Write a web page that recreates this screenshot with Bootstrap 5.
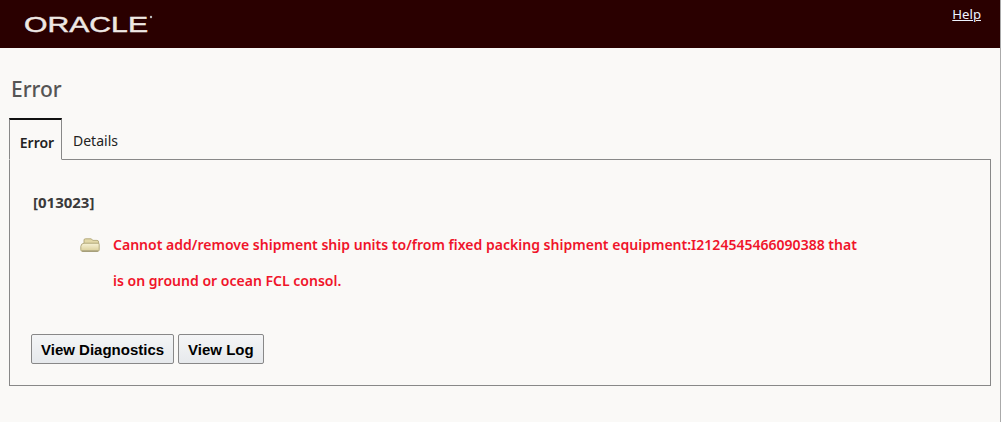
<!DOCTYPE html>
<html lang="en">
<head>
<meta charset="utf-8">
<title>Error</title>
<link rel="stylesheet" href="https://cdn.jsdelivr.net/npm/bootstrap@5.3.0/dist/css/bootstrap.min.css">
<style>
html,body{height:422px;overflow:hidden}
body{background:#faf9f7;font-family:"Noto Sans","Open Sans",sans-serif;font-size:14px;color:#333;border-right:1px solid #aaa}
.topbar{height:48px;background:#2a0000;padding:0 19px 0 24px}
.logo-svg{display:block;margin-top:12px}
.logo-svg text{font-family:"Liberation Sans",sans-serif;font-size:22.5px;fill:#eee8e4;stroke:#eee8e4;stroke-width:.45}
.help-link{color:#eef4ff;font-size:13.2px;line-height:18px;margin-top:5px}
.help-link:hover{color:#fff}
.page-wrap{padding:0 9px 0 9px}
.page-heading{font-size:21px;font-weight:500;color:#555;line-height:28px;margin:27px 0 15px 2px}
.tab-strip{border-bottom:1px solid #888;height:42px}
.tab-strip .nav-link{border:0;border-radius:0;color:#222;font-size:14px;line-height:20px;padding:14px 0 0;margin:0;background:transparent}
.tab-strip .nav-item:first-child .nav-link{width:53px;height:42px;border-top:2px solid #111;border-left:1px solid #888;border-right:1px solid #888;border-bottom:1px solid #faf9f7;font-weight:600;color:#222;text-align:center;padding-top:13px;padding-left:3px;background:#faf9f7}
.tab-strip .nav-item:last-child .nav-link{padding:13px 0 0 11px}
.tab-body{height:226px;border:1px solid #888;border-top:0;padding:32px 21px 21px 21px}
.code-line{font-weight:700;color:#3a3a3a;font-size:15px;line-height:20px;margin-left:2px}
.msg-row{margin:15px 0 0 49px}
.msg-icon{width:20px;height:14px;margin:11px 13px 0 0;flex:none}
.msg-text{width:752px;color:#f0142a;font-weight:600;font-size:14.04px;line-height:36px}
.action-btn{font-family:"Liberation Sans",sans-serif;font-weight:700;font-size:15px;line-height:17px;color:#000;padding:6px 9px 5px;height:30px;border:1px solid #888;border-radius:2px;background:linear-gradient(#f4f5f6,#e6e9ec);white-space:nowrap}
.action-row{margin-top:35px}
</style>
</head>
<body>
<header class="topbar d-flex justify-content-between align-items-start">
  <svg class="logo-svg" width="130" height="24" viewBox="0 0 130 24" role="img" aria-label="Oracle">
    <text x="0" y="20" textLength="124" lengthAdjust="spacingAndGlyphs">ORACLE</text>
    <circle cx="127" cy="5" r="1.2" fill="#bbb"/>
  </svg>
  <a class="help-link" href="#">Help</a>
</header>
<main class="page-wrap">
  <h1 class="page-heading">Error</h1>
  <ul class="nav nav-tabs tab-strip">
    <li class="nav-item"><a class="nav-link active" href="#">Error</a></li>
    <li class="nav-item"><a class="nav-link" href="#">Details</a></li>
  </ul>
  <section class="tab-body">
    <div class="code-line">[013023]</div>
    <div class="msg-row d-flex align-items-start">
      <svg class="msg-icon" viewBox="0 0 20 14" aria-hidden="true">
        <defs><linearGradient id="fg" x1="0" y1="0" x2="0" y2="1"><stop offset="0" stop-color="#f8f3d6"/><stop offset="1" stop-color="#d9cd98"/></linearGradient></defs>
        <path d="M4 5V2Q4 .8 5.5 .8H11L13 2.4H17Q18.6 2.4 18.6 4V6H4Z" fill="#e2d8a8" stroke="#b0a676" stroke-width=".9"/>
        <path d="M.8 8.5Q1 5.5 4 5.2H18.2Q19.4 5.2 19.2 6.8V11.8Q19.2 13.4 17.5 13.4H2.6Q.8 13.4 .8 11.8Z" fill="url(#fg)" stroke="#aea475" stroke-width=".9"/>
        <path d="M2 13H18" stroke="#8f8a70" stroke-width=".9"/>
      </svg>
      <div class="msg-text">Cannot add/remove shipment ship units to/from fixed packing shipment equipment:I2124545466090388 that is on ground or ocean FCL consol.</div>
    </div>
    <div class="action-row d-flex gap-1">
      <button type="button" class="btn action-btn">View Diagnostics</button>
      <button type="button" class="btn action-btn">View Log</button>
    </div>
  </section>
</main>
<script src="https://cdn.jsdelivr.net/npm/bootstrap@5.3.0/dist/js/bootstrap.bundle.min.js"></script>
</body>
</html>
